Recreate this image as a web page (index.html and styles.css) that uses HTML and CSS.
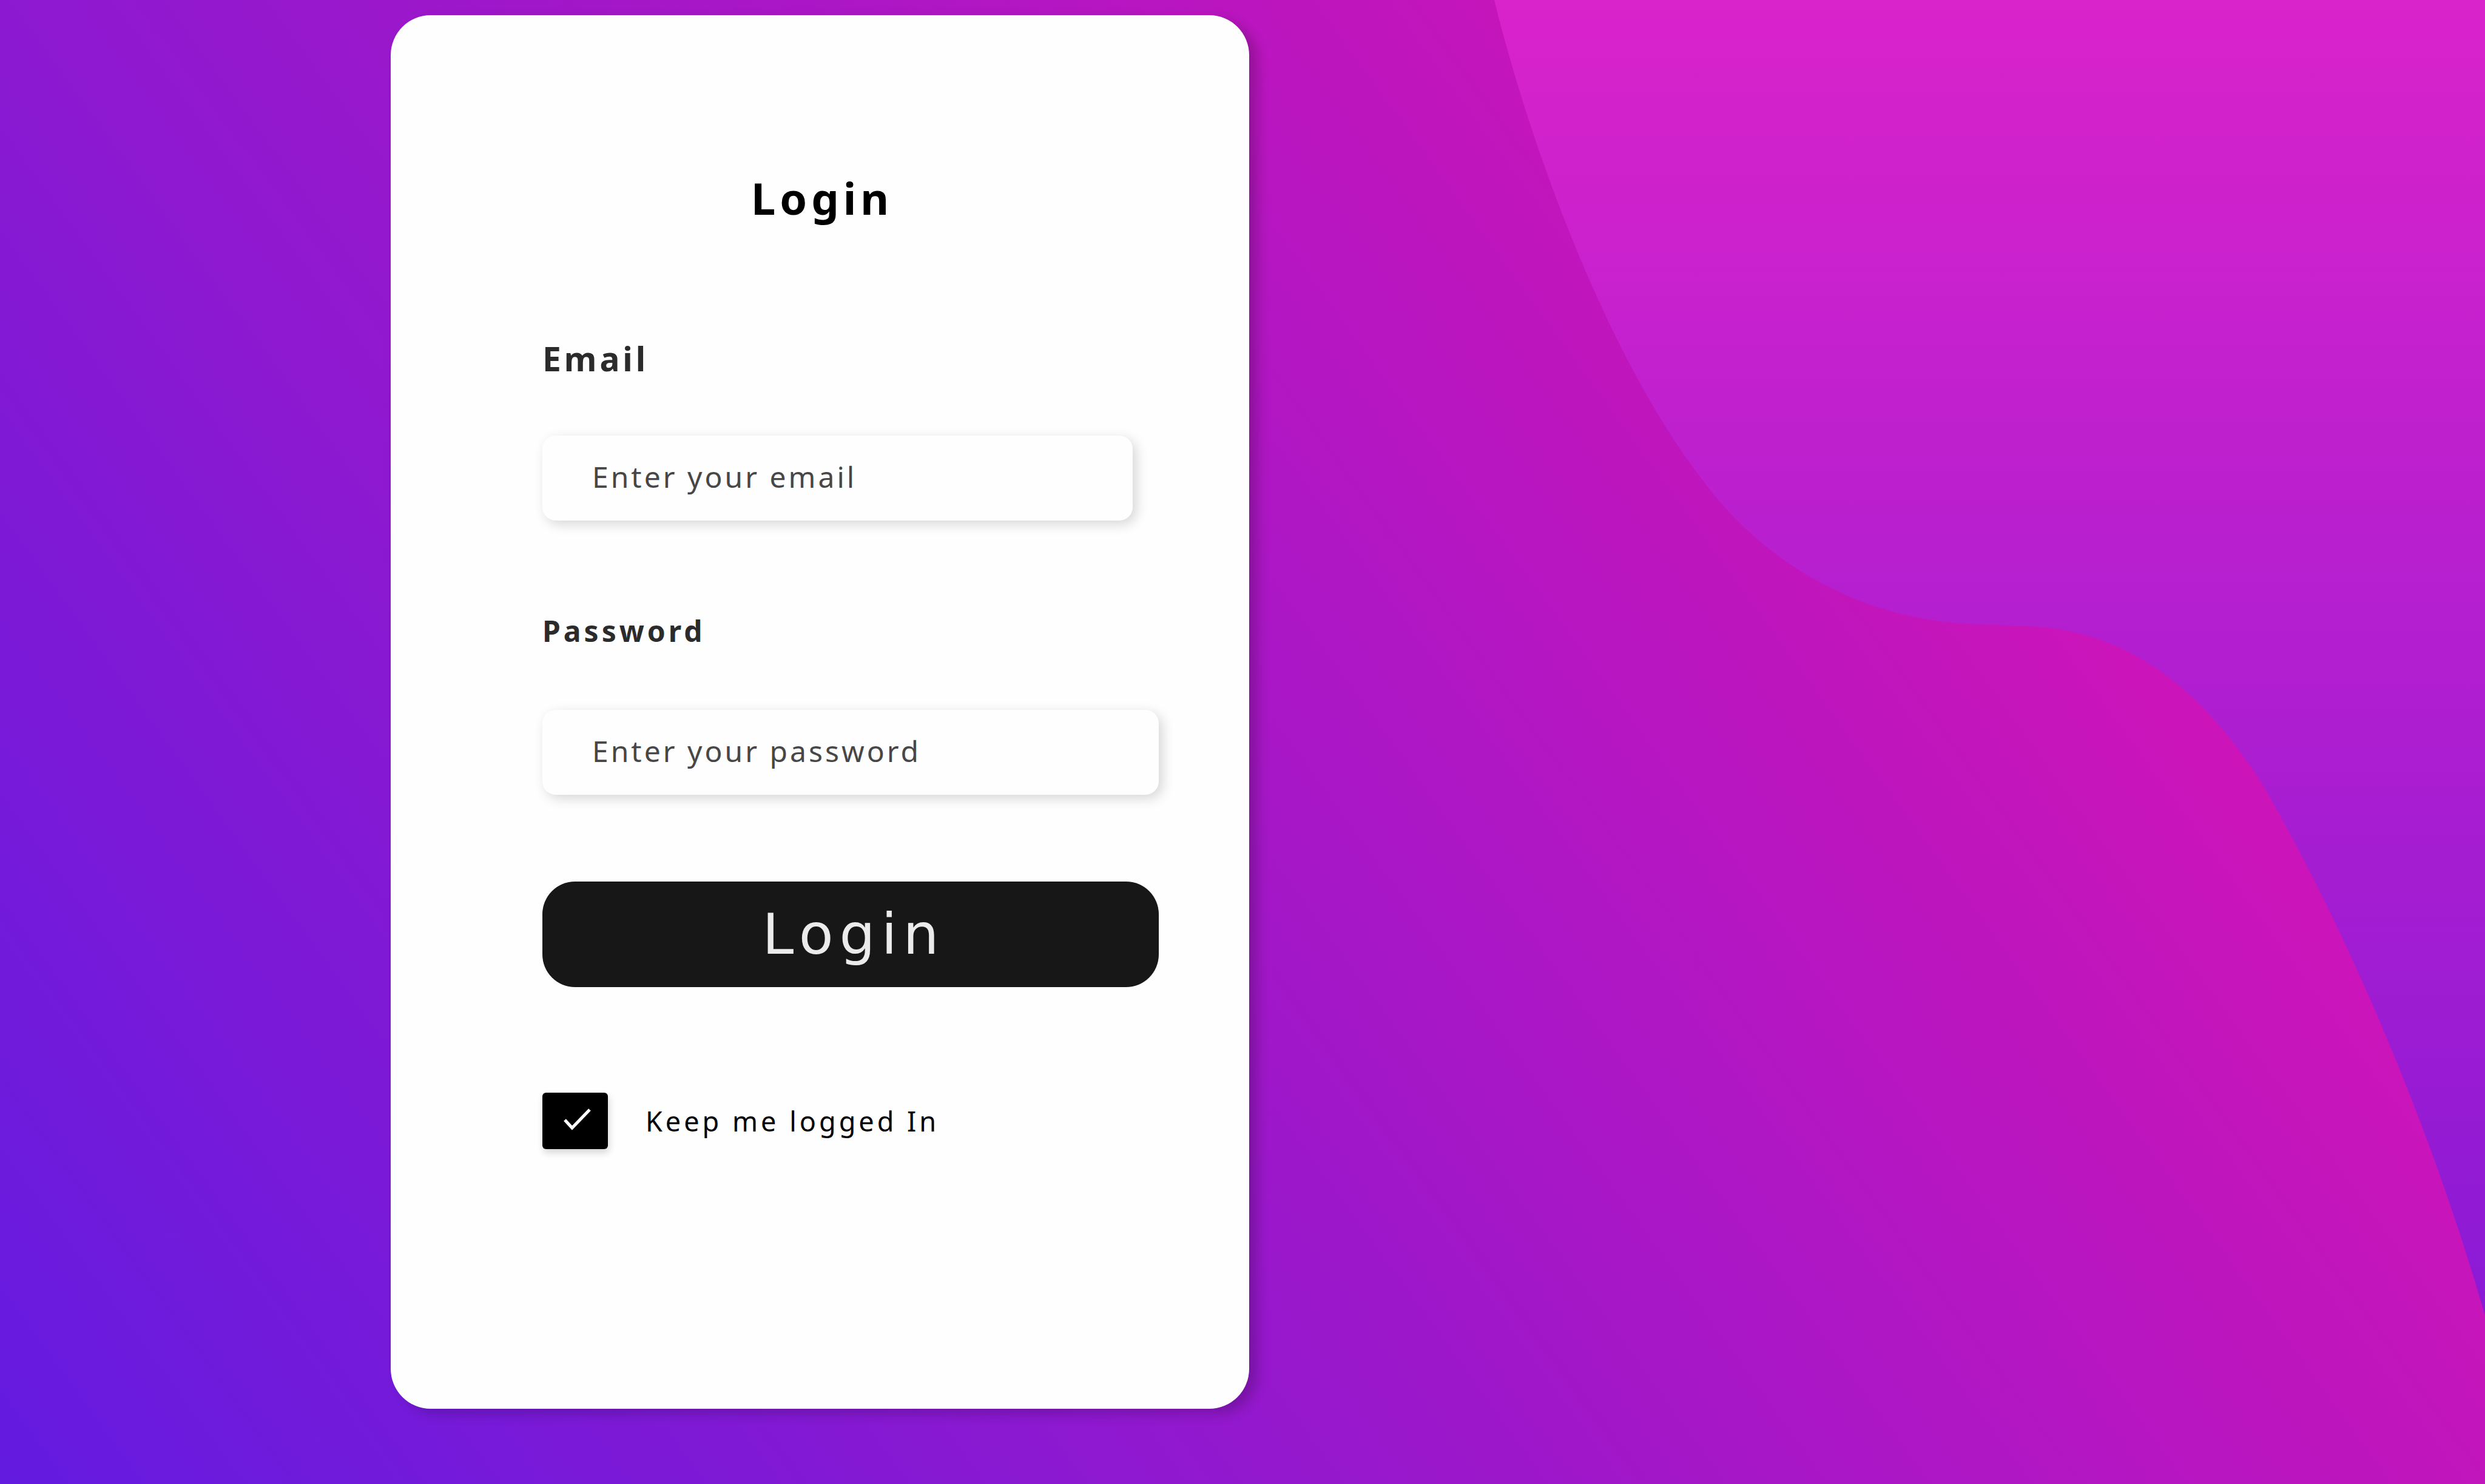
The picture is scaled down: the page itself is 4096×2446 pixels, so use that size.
FILE: index.html
```html
<!DOCTYPE html>
<html lang="en">
<head>
<meta charset="utf-8">
<title>Login</title>
<link rel="stylesheet" href="styles.css">
</head>
<body>
<svg class="wave" viewBox="0 0 4234 2528" preserveAspectRatio="none" aria-hidden="true">
  <defs>
    <linearGradient id="wave-fill" gradientUnits="userSpaceOnUse" x1="0" y1="0" x2="0" y2="2241">
      <stop offset="0" stop-color="#d923cb"/>
      <stop offset="1" stop-color="#8a1ad5"/>
    </linearGradient>
  </defs>
  <path fill="url(#wave-fill)" d="M2546 0C2600 220 2740 640 2942 868C3050 985 3190 1050 3340 1062C3385 1065 3430 1065 3473 1068C3620 1080 3740 1160 3849 1327C3975 1540 4130 1880 4234 2241V0Z"/>
</svg>
<main class="page">
  <form class="card">
    <h1 class="title">Login</h1>
    <div class="fields">
      <label class="label label-email" for="email">Email</label>
      <input class="field field-email" id="email" type="email" placeholder="Enter your email">
      <label class="label label-password" for="password">Password</label>
      <input class="field" id="password" type="password" placeholder="Enter your password">
      <button class="submit" type="button">Login</button>
      <div class="keep">
        <span class="tick">
          <input class="tick-box" id="keep" type="checkbox" checked>
          <svg class="tick-mark" viewBox="0 0 108 93" aria-hidden="true"><path d="M37 45L49 58L78 28" fill="none" stroke="#fff" stroke-width="5"/></svg>
        </span>
        <label class="keep-label" for="keep">Keep me logged In</label>
      </div>
    </div>
  </form>
</main>
</body>
</html>
```
FILE: styles.css
```css
* {
  box-sizing: border-box;
}

body {
  margin: 0;
  min-height: 100vh;
  position: relative;
  background: linear-gradient(54deg, #631be0 0%, #d614b5 85%);
  font-family: "Noto Sans", "Open Sans", sans-serif;
}

.wave {
  position: absolute;
  inset: 0;
  width: 100%;
  height: 100%;
}

.page {
  position: relative;
  display: flex;
  min-height: 100vh;
  padding: 25px 0 124px 644px;
}

.card {
  display: flex;
  flex-direction: column;
  width: 1415px;
  padding-top: 252px;
  border-radius: 66px;
  background: #fefefe;
  box-shadow: 14px 8px 20px rgba(0, 0, 0, 0.2);
}

.title {
  margin: 0 0 178px;
  padding-left: 7px;
  font-size: 72px;
  line-height: 98px;
  font-weight: 700;
  letter-spacing: 7px;
  text-align: center;
  color: #000;
}

.fields {
  display: flex;
  flex-direction: column;
  padding: 0 149px 0 250px;
}

.label {
  line-height: 76px;
  font-weight: 700;
  letter-spacing: 5px;
  color: #2b2b2b;
}

.label-email {
  margin-bottom: 89px;
  font-size: 55px;
}

.label-password {
  margin-bottom: 92px;
  font-size: 48px;
}

.field {
  width: 100%;
  height: 140px;
  padding: 0 82px 6px;
  border: 0;
  border-radius: 22px;
  background: #fefefe;
  box-shadow: 6px 6px 20px rgba(0, 0, 0, 0.16);
  font: 400 48px/66px "Noto Sans", "Open Sans", sans-serif;
  letter-spacing: 4px;
}

.field-email {
  width: 973px;
  margin-bottom: 144px;
}

.field::placeholder {
  color: #474747;
  opacity: 1;
}

.submit {
  height: 174px;
  margin-top: 143px;
  padding: 0 0 0 10px;
  border: 0;
  border-radius: 54px;
  background: #171717;
  color: #ebebeb;
  font: 400 93px/120px "DejaVu Sans", Verdana, sans-serif;
  letter-spacing: 10px;
}

.keep {
  display: flex;
  align-items: center;
  gap: 62px;
  margin-top: 174px;
}

.tick {
  position: relative;
  width: 108px;
  height: 93px;
}

.tick-box {
  appearance: none;
  display: block;
  width: 108px;
  height: 93px;
  margin: 0;
  border-radius: 6px;
  background: #000;
  box-shadow: 2px 6px 12px rgba(0, 0, 0, 0.16);
}

.tick-mark {
  position: absolute;
  inset: 0;
  pointer-events: none;
}

.keep-label {
  font-size: 45px;
  line-height: 60px;
  letter-spacing: 5px;
  color: #000;
}
```
